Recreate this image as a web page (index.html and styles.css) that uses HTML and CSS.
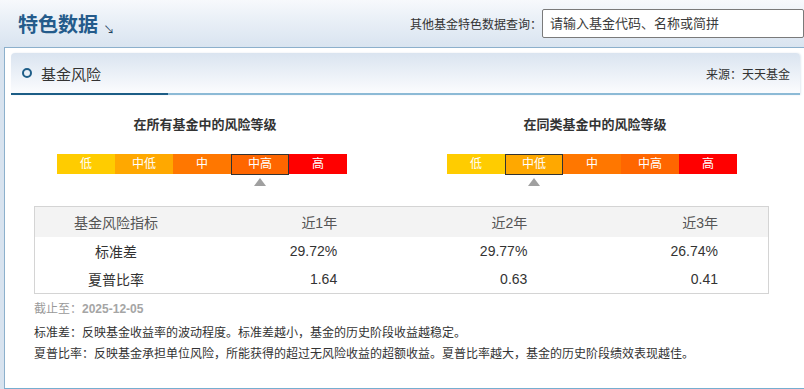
FILE: index.html
```html
<!DOCTYPE html>
<html lang="zh-CN">
<head>
  <meta charset="UTF-8">
  <title>特色数据 · 基金风险</title>
  <meta name="viewport" content="width=device-width, initial-scale=1.0">
  <link rel="stylesheet" href="styles.css">
</head>
<body>
  <div class="top">
    <h2 class="top-title">特色数据 <span class="arrow">↘</span></h2>
    <div class="search">
      <label for="fundkey">其他基金特色数据查询：</label>
      <input id="fundkey" placeholder="请输入基金代码、名称或简拼">
    </div>
  </div>

  <div class="panel">
    <div class="sec-head">
      <div class="tab"><span class="dot"></span><span class="sec-title">基金风险</span></div>
      <span class="source">来源：天天基金</span>
    </div>

    <div class="levels">
      <div class="level">
        <h3>在所有基金中的风险等级</h3>
        <div class="bar">
          <span class="lv1">低</span>
          <span class="lv2">中低</span>
          <span class="lv3">中</span>
          <span class="lv4 on">中高</span>
          <span class="lv5">高</span>
        </div>
      </div>
      <div class="level">
        <h3>在同类基金中的风险等级</h3>
        <div class="bar">
          <span class="lv1">低</span>
          <span class="lv2 on">中低</span>
          <span class="lv3">中</span>
          <span class="lv4">中高</span>
          <span class="lv5">高</span>
        </div>
      </div>
    </div>

    <table class="risk">
      <thead>
        <tr><th class="name">基金风险指标</th><th>近1年</th><th>近2年</th><th>近3年</th></tr>
      </thead>
      <tbody>
        <tr><td class="name">标准差</td><td>29.72%</td><td>29.77%</td><td>26.74%</td></tr>
        <tr><td class="name">夏普比率</td><td>1.64</td><td>0.63</td><td>0.41</td></tr>
      </tbody>
    </table>

    <p class="date">截止至：<b>2025-12-05</b></p>
    <p class="notes">
      标准差：反映基金收益率的波动程度。标准差越小，基金的历史阶段收益越稳定。<br>
      夏普比率：反映基金承担单位风险，所能获得的超过无风险收益的超额收益。夏普比率越大，基金的历史阶段绩效表现越佳。
    </p>
  </div>
</body>
</html>
```

FILE: styles.css
```css
body { margin: 0; font-family: "Liberation Sans", "Noto Sans CJK SC", sans-serif; color: #333; background: #d8e3ef; overflow: hidden; }

.top { height: 47px; display: flex; align-items: center; justify-content: space-between; padding-left: 18px; background: linear-gradient(#f7f9fc, #eaf0f7 40%, #d9e4f0); }
.top-title { margin: 0; font-size: 20px; font-weight: bold; color: #245b8b; }
.arrow { font-size: 11px; font-weight: normal; color: #1d3f5f; margin-left: 0; vertical-align: -2px; }
.search { display: flex; align-items: center; }
.search label { font-size: 12px; color: #333; }
.search input { width: 262px; height: 29px; box-sizing: border-box; border: 1px solid #7a7a7a; border-radius: 2px; padding: 0 7px; font-size: 13px; font-family: inherit; }
.search input::placeholder { color: #3a3a3a; }

.panel { margin-left: 4px; height: 342px; box-sizing: border-box; background: #fff; border: 1px solid #8cb0cc; border-right: none; border-bottom-color: #76aed0; padding-top: 5px; }

.sec-head { margin: 0 4px 0 6px; height: 42px; box-sizing: border-box; display: flex; align-items: stretch; justify-content: space-between; border-bottom: 2px solid #8cbad6; border-radius: 4px 4px 0 0; background: linear-gradient(#dae4f0, #fbfcfe); box-shadow: 1px 0 2px #e3e9f0; }
.tab { width: 157px; display: flex; align-items: center; padding-left: 11px; box-sizing: border-box; border-bottom: 2px solid #1c5d86; margin-bottom: -2px; }
.dot { width: 10px; height: 10px; box-sizing: border-box; border: 2px solid #1f5e88; border-radius: 50%; margin-right: 9px; }
.sec-title { font-size: 15px; color: #333; }
.source { align-self: center; font-size: 12px; padding-right: 10px; }

.levels { display: flex; gap: 100px; padding-left: 52px; margin-top: 21px; }
.level { width: 290px; }
.level h3 { margin: 0; padding-left: 6px; text-align: center; font-size: 13px; line-height: 18px; color: #333; }
.bar { display: flex; margin-top: 20px; height: 20px; }
.bar span { position: relative; flex: 1; text-align: center; font-size: 12px; line-height: 20px; color: #fff; }
.lv1 { background: #ffcc00; }
.lv2 { background: #ffa800; }
.lv3 { background: #ff7700; }
.lv4 { background: #ff6600; }
.lv5 { background: #ff0000; }
.bar .on { outline: 1px solid #333; outline-offset: -1px; height: 21px; }
.bar .on::after { content: ""; position: absolute; left: 50%; top: 24px; margin-left: -6px; border: 6px solid transparent; border-top: none; border-bottom: 8px solid #a0a0a0; }

.risk { margin: 32px 0 0 29px; width: 735px; border-collapse: collapse; border: 1px solid #d4d4d4; font-size: 14px; }
.risk th { height: 30px; background: #f3f3f3; font-weight: normal; color: #555; }
.risk td { height: 28px; }
.risk th, .risk td { padding: 0 50px 0 0; text-align: right; }
.risk .name { width: 162px; padding: 0; text-align: center; }

.date { margin: 7px 0 0 29px; font-size: 12px; line-height: 16px; color: #999; }
.date b { color: #a5a5a5; }
.notes { margin: 6px 0 0 29px; font-size: 12px; line-height: 21px; color: #333; }
```
